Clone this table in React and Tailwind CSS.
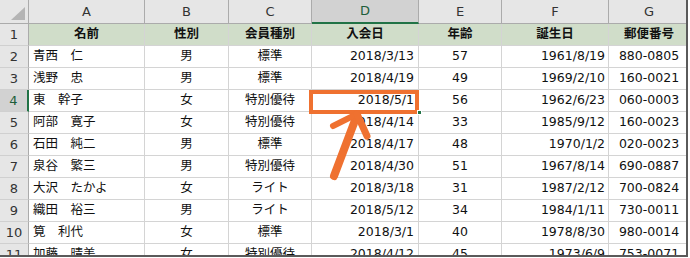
const cols = ["A", "B", "C", "D", "E", "F", "G"];

const head = ["名前", "性別", "会員種別", "入会日", "年齢", "誕生日", "郵便番号"];

const rows = [
  ["青西　仁", "男", "標準", "2018/3/13", "57", "1961/8/19", "880-0805"],
  ["浅野　忠", "男", "標準", "2018/4/19", "49", "1969/2/10", "160-0021"],
  ["東　幹子", "女", "特別優待", "2018/5/1", "56", "1962/6/23", "060-0003"],
  ["阿部　寛子", "女", "特別優待", "2018/4/14", "33", "1985/9/12", "160-0023"],
  ["石田　純二", "男", "標準", "2018/4/17", "48", "1970/1/2", "020-0023"],
  ["泉谷　繁三", "男", "特別優待", "2018/4/30", "51", "1967/8/14", "690-0887"],
  ["大沢　たかよ", "女", "ライト", "2018/3/18", "31", "1987/2/12", "700-0824"],
  ["織田　裕三", "男", "ライト", "2018/5/12", "34", "1984/1/11", "730-0011"],
  ["筧　利代", "女", "標準", "2018/3/1", "40", "1978/8/30", "980-0014"],
  ["加藤　晴美", "女", "特別優待", "2018/4/12", "45", "1973/6/9", "753-0071"],
];

// alignment per column
const align = [
  "justify-start pl-[4px]",
  "justify-center",
  "justify-center",
  "justify-end pr-[4px]",
  "justify-center",
  "justify-end pr-[3px]",
  "justify-center",
];

const grid = "grid grid-cols-[29px_116px_84px_83px_107px_83px_107px_81px]";

export default function App() {
  return (
    <div className="w-[690px] h-[258px] bg-white overflow-hidden">
      <div
        className="relative w-[688px] h-[257px] overflow-hidden border-r-2 border-b-2 border-[#5a5a5a] text-[12.5px] text-[#111]"
        style={{ fontFamily: '"DejaVu Sans", "Noto Sans CJK JP", sans-serif' }}
      >
        <div className="w-[690px]">
          {/* column letters */}
          <div className={`${grid} h-[24px]`}>
            <div className="relative bg-[#e6e6e6] border-r border-b border-[#ababab]">
              <div className="absolute right-[3px] bottom-[3px] w-0 h-0 border-l-[14px] border-l-transparent border-b-[13px] border-b-[#b4b4b4]" />
            </div>
            {cols.map((c) =>
              c === "D" ? (
                <div
                  key={c}
                  className="flex items-center justify-center bg-[#d2d2d2] border-r border-[#ababab] border-b-2 border-b-[#217346] text-[#1d5e3a] text-[13px]"
                >
                  {c}
                </div>
              ) : (
                <div
                  key={c}
                  className="flex items-center justify-center bg-[#e6e6e6] border-r border-b border-[#ababab] text-[#333] text-[13px]"
                >
                  {c}
                </div>
              )
            )}
          </div>

          {/* row 1 headings */}
          <div className={`${grid} h-[22px]`}>
            <div className="flex items-center justify-center bg-[#e6e6e6] border-r border-b border-[#ababab] border-b-[#d0d0d0] text-[#333] text-[13px]">
              1
            </div>
            {head.map((h) => (
              <div
                key={h}
                className="flex items-center justify-center bg-[#d0ddc9] border-r border-b border-[#d4d4d4] font-bold"
              >
                {h}
              </div>
            ))}
          </div>

          {rows.map((r, i) => {
            const n = i + 2;
            const sel = n === 4;
            return (
              <div key={n} className={`${grid} h-[22px]`}>
                <div
                  className={
                    sel
                      ? "flex items-center justify-center bg-[#d2d2d2] border-r-2 border-r-[#217346] border-b border-b-[#d0d0d0] text-[#1d5e3a] text-[13px]"
                      : "flex items-center justify-center bg-[#e6e6e6] border-r border-r-[#ababab] border-b border-b-[#d0d0d0] text-[#333] text-[13px]"
                  }
                >
                  {n}
                </div>
                {r.map((v, j) => (
                  <div
                    key={j}
                    className={`flex items-center whitespace-nowrap border-r border-b border-[#d4d4d4] ${align[j]}`}
                  >
                    {v}
                  </div>
                ))}
              </div>
            );
          })}
        </div>

        {/* highlight box on D4 */}
        <div className="absolute left-[309px] top-[90px] w-[110px] h-[24px] border-4 border-[#ef7130]" />
        <div className="absolute left-[417px] top-[110px] w-[5px] h-[5px] bg-[#217346] border border-white" />

        {/* hand drawn arrow */}
        <svg className="absolute left-0 top-0" width="690" height="258">
          <g stroke="#ef7130" strokeLinecap="round" fill="none">
            <line x1="334" y1="176" x2="357" y2="115" strokeWidth="8" />
            <line x1="357" y1="114" x2="333" y2="126" strokeWidth="6" />
            <line x1="357" y1="114" x2="367" y2="136" strokeWidth="7" />
          </g>
        </svg>
      </div>
    </div>
  );
}
